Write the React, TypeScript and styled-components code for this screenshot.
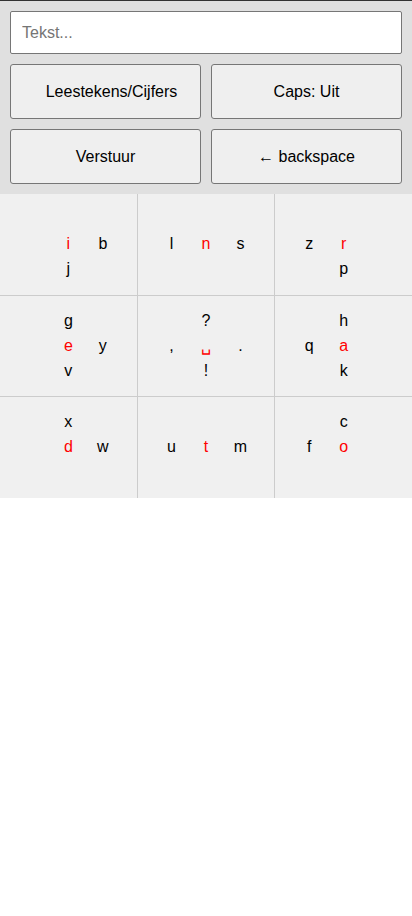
import React from "react";
import styled, { createGlobalStyle } from "styled-components";

const Global = createGlobalStyle`
  html, body { margin: 0; padding: 0; background: #fff; }
  body { font-family: "Liberation Sans", Arial, sans-serif; }
  * { box-sizing: border-box; }
`;

const Panel = styled.div`
  border-top: 1px solid #333;
  background: #e0e0e0;
  padding: 10px;
  display: flex;
  flex-direction: column;
  gap: 10px;
`;

const Input = styled.input`
  height: 43px;
  width: 100%;
  border: 1px solid #767676;
  border-radius: 2px;
  padding: 0 11px;
  font-family: "Liberation Sans", Arial, sans-serif;
  font-size: 16px;
  background: #fff;
  &::placeholder { color: #757575; }
`;

const ButtonGrid = styled.div`
  display: grid;
  grid-template-columns: 1fr 1fr;
  gap: 10px;
`;

const Button = styled.button<{ $indent?: boolean }>`
  height: 55px;
  background: #efefef;
  border: 1px solid #767676;
  border-radius: 3px;
  padding: 0 6px 0 ${(p) => (p.$indent ? "18px" : "6px")};
  font-family: "Liberation Sans", Arial, sans-serif;
  font-size: 16px;
  color: #000;
`;

const Keys = styled.div`
  display: grid;
  grid-template-columns: repeat(3, 1fr);
  gap: 1px;
  background: #cccccc;
`;

const Cell = styled.div`
  height: 100.5px;
  background: #f0f0f0;
  display: flex;
  align-items: center;
  justify-content: center;
`;

const Sub = styled.div`
  display: grid;
  grid-template-columns: repeat(3, 34.5px);
  grid-template-rows: repeat(3, 25px);
`;

const Letter = styled.span<{ $red?: boolean }>`
  display: flex;
  align-items: center;
  justify-content: center;
  font-size: 16px;
  color: ${(p) => (p.$red ? "#ff0000" : "#000")};
`;

type K = string;
const cells: K[][] = [
  ["", "", "", "", "i", "b", "", "j", ""],
  ["", "", "", "l", "n", "s", "", "", ""],
  ["", "", "", "z", "r", "", "", "p", ""],
  ["", "g", "", "", "e", "y", "", "v", ""],
  ["", "?", "", ",", "␣", ".", "", "!", ""],
  ["", "h", "", "q", "a", "", "", "k", ""],
  ["", "x", "", "", "d", "w", "", "", ""],
  ["", "", "", "u", "t", "m", "", "", ""],
  ["", "c", "", "f", "o", "", "", "", ""],
];

export default function App() {
  return (
    <>
      <Global />
      <Panel>
        <Input placeholder="Tekst..." />
        <ButtonGrid>
          <Button $indent>Leestekens/Cijfers</Button>
          <Button>Caps: Uit</Button>
          <Button>Verstuur</Button>
          <Button>← backspace</Button>
        </ButtonGrid>
      </Panel>
      <Keys>
        {cells.map((c, i) => (
          <Cell key={i}>
            <Sub>
              {c.map((l, j) => (
                <Letter key={j} $red={j === 4}>
                  {l}
                </Letter>
              ))}
            </Sub>
          </Cell>
        ))}
      </Keys>
    </>
  );
}
